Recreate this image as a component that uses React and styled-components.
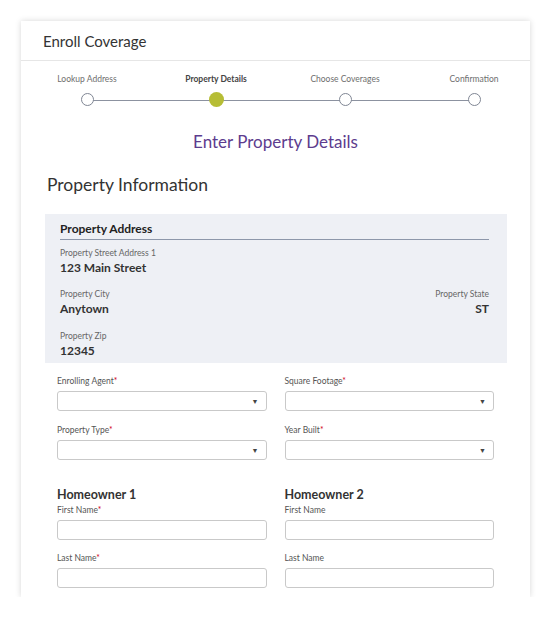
import React from "react";
import styled, { createGlobalStyle } from "styled-components";

const Global = createGlobalStyle`
  html, body { margin: 0; padding: 0; background: #fff; }
  body { font-family: Lato, "Noto Sans", sans-serif; color: #333; }
  * { box-sizing: border-box; }
`;

const Page = styled.div`
  padding: 21px 0 0 21px;
`;

const Card = styled.div`
  width: 509px;
  height: 576px;
  background: #fff;
  box-shadow: 0 0 6px rgba(0, 0, 0, 0.16);
  display: flex;
  flex-direction: column;
`;

const Header = styled.div`
  height: 40px;
  border-bottom: 1px solid #e6e6e6;
  padding-left: 22px;
  display: flex;
  align-items: center;
  font-size: 15px;
  color: #333;
`;

const Stepper = styled.div`
  display: grid;
  grid-template-columns: repeat(4, 129px);
  margin-left: 1.5px;
  padding-top: 12px;
`;

const Step = styled.div`
  position: relative;
  display: flex;
  flex-direction: column;
  align-items: center;
  &:not(:first-child)::before {
    content: "";
    position: absolute;
    left: -50%;
    width: 100%;
    top: 26.5px;
    height: 1px;
    background: #8c92a0;
  }
`;

const StepLabel = styled.div`
  font-size: 8.5px;
  line-height: 12px;
  height: 12px;
  white-space: nowrap;
  color: ${(p) => (p.$active ? "#444" : "#6e6e6e")};
  font-weight: ${(p) => (p.$active ? 700 : 400)};
`;

const Dot = styled.div`
  position: relative;
  z-index: 1;
  margin-top: ${(p) => (p.$active ? 7 : 8)}px;
  width: ${(p) => (p.$active ? 15 : 13)}px;
  height: ${(p) => (p.$active ? 15 : 13)}px;
  border-radius: 50%;
  background: ${(p) => (p.$active ? "#b6bd35" : "#fff")};
  border: ${(p) => (p.$active ? "none" : "1.5px solid #7f8694")};
`;

const Title = styled.div`
  margin-top: 24px;
  text-align: center;
  font-size: 17px;
  line-height: 22px;
  color: #5d3c8e;
`;

const SectionTitle = styled.div`
  margin-top: 21px;
  padding-left: 26px;
  font-size: 17.5px;
  line-height: 22px;
  color: #333;
`;

const Panel = styled.div`
  margin: 18px 23px 0 24px;
  background: #eef0f5;
  padding: 7px 18px 5px 15px;
`;

const PanelHeading = styled.div`
  font-weight: 700;
  font-size: 12px;
  line-height: 16px;
  padding-bottom: 2px;
  border-bottom: 1px solid #8d97aa;
  color: #222;
`;

const InfoRow = styled.div`
  display: flex;
  justify-content: space-between;
  margin-top: ${(p) => p.$gap}px;
`;

const Info = styled.div`
  display: flex;
  flex-direction: column;
  align-items: ${(p) => (p.$right ? "flex-end" : "flex-start")};
`;

const InfoLabel = styled.div`
  font-size: 8.5px;
  line-height: 11px;
  color: #666;
`;

const InfoValue = styled.div`
  margin-top: 2px;
  font-size: 12px;
  line-height: 14px;
  font-weight: 700;
  color: #333;
`;

const Form = styled.div`
  padding: 0 36px;
  margin-top: 13px;
  display: grid;
  grid-template-columns: 1fr 1fr;
  column-gap: 18px;
`;

const Field = styled.div`
  display: flex;
  flex-direction: column;
  margin-top: ${(p) => p.$gap || 0}px;
`;

const Label = styled.div`
  font-size: 8.5px;
  line-height: 11px;
  color: #555;
  margin-bottom: 4px;
`;

const Req = styled.span`
  color: #d0021b;
`;

const Box = styled.div`
  height: 20px;
  border: 1px solid #c9c9c9;
  border-radius: 3px;
  background: #fff;
  display: flex;
  align-items: center;
  justify-content: flex-end;
  padding-right: 7px;
`;

const Arrow = styled.span`
  font-size: 7px;
  color: #444;
  line-height: 1;
`;

const Owner = styled.div`
  margin-top: 27px;
  font-size: 12.5px;
  line-height: 16px;
  font-weight: 700;
  color: #333;
  margin-bottom: 1.5px;
`;

const steps = ["Lookup Address", "Property Details", "Choose Coverages", "Confirmation"];

const LabelText = ({ text, req }) => (
  <Label>
    {text}
    {req && <Req>*</Req>}
  </Label>
);

export default function App() {
  return (
    <Page>
      <Global />
      <Card>
        <Header>Enroll Coverage</Header>
        <Stepper>
          {steps.map((s, i) => (
            <Step key={s}>
              <StepLabel $active={i === 1}>{s}</StepLabel>
              <Dot $active={i === 1} />
            </Step>
          ))}
        </Stepper>
        <Title>Enter Property Details</Title>
        <SectionTitle>Property Information</SectionTitle>
        <Panel>
          <PanelHeading>Property Address</PanelHeading>
          <InfoRow $gap={7.5}>
            <Info>
              <InfoLabel>Property Street Address 1</InfoLabel>
              <InfoValue>123 Main Street</InfoValue>
            </Info>
          </InfoRow>
          <InfoRow $gap={14.5}>
            <Info>
              <InfoLabel>Property City</InfoLabel>
              <InfoValue>Anytown</InfoValue>
            </Info>
            <Info $right>
              <InfoLabel>Property State</InfoLabel>
              <InfoValue>ST</InfoValue>
            </Info>
          </InfoRow>
          <InfoRow $gap={15}>
            <Info>
              <InfoLabel>Property Zip</InfoLabel>
              <InfoValue>12345</InfoValue>
            </Info>
          </InfoRow>
        </Panel>
        <Form>
          <Field>
            <LabelText text="Enrolling Agent" req />
            <Box><Arrow>▼</Arrow></Box>
          </Field>
          <Field>
            <LabelText text="Square Footage" req />
            <Box><Arrow>▼</Arrow></Box>
          </Field>
          <Field $gap={14}>
            <LabelText text="Property Type" req />
            <Box><Arrow>▼</Arrow></Box>
          </Field>
          <Field $gap={14}>
            <LabelText text="Year Built" req />
            <Box><Arrow>▼</Arrow></Box>
          </Field>
          <Field>
            <Owner>Homeowner 1</Owner>
            <LabelText text="First Name" req />
            <Box />
          </Field>
          <Field>
            <Owner>Homeowner 2</Owner>
            <LabelText text="First Name" />
            <Box />
          </Field>
          <Field $gap={13}>
            <LabelText text="Last Name" req />
            <Box />
          </Field>
          <Field $gap={13}>
            <LabelText text="Last Name" />
            <Box />
          </Field>
        </Form>
      </Card>
    </Page>
  );
}
